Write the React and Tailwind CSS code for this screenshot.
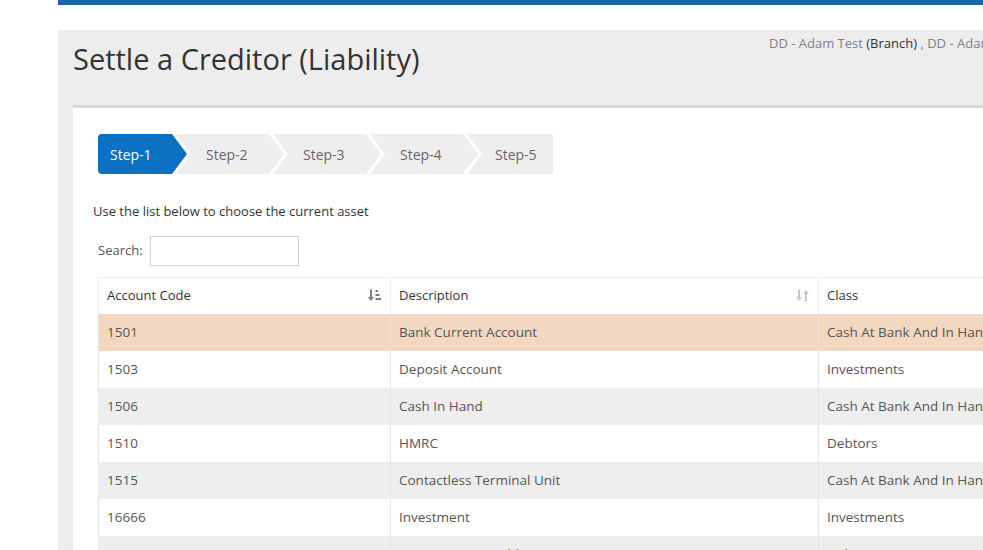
import React from 'react';

const steps = ['Step-1', 'Step-2', 'Step-3', 'Step-4', 'Step-5'];

const rows = [
  { code: '1501', desc: 'Bank Current Account', cls: 'Cash At Bank And In Hand', selected: true },
  { code: '1503', desc: 'Deposit Account', cls: 'Investments' },
  { code: '1506', desc: 'Cash In Hand', cls: 'Cash At Bank And In Hand' },
  { code: '1510', desc: 'HMRC', cls: 'Debtors' },
  { code: '1515', desc: 'Contactless Terminal Unit', cls: 'Cash At Bank And In Hand' },
  { code: '16666', desc: 'Investment', cls: 'Investments' },
  { code: '20000', desc: 'Accounts Receivable', cls: 'Debtors' },
];

const SortAsc = () => (
  <svg width="13" height="13" viewBox="0 0 13 13" className="text-[#7d7d7d]" fill="currentColor">
    <rect x="2" y="0.5" width="2" height="8" />
    <path d="M0 8h6l-3 4z" />
    <rect x="7.5" y="1" width="2.5" height="2" />
    <rect x="7.5" y="5" width="4" height="2" />
    <rect x="7.5" y="9" width="5.5" height="2" />
  </svg>
);

const SortBoth = () => (
  <svg width="13" height="13" viewBox="0 0 13 13" className="text-[#c9c9c9]" fill="currentColor">
    <rect x="2" y="0.5" width="2" height="8" />
    <path d="M0 8h6l-3 4z" />
    <rect x="9" y="4.5" width="2" height="8" />
    <path d="M7 5h6l-3 -4z" />
  </svg>
);

const Step = ({ label, index }) => {
  if (index === 0) {
    return (
      <div className="w-[89px] h-[40px] shrink-0 bg-[#0d71c3] text-white rounded-l-[4px] pl-[12px] flex items-center [clip-path:polygon(0_0,74px_0,89px_50%,74px_100%,0_100%)]">
        {label}
      </div>
    );
  }
  if (index === steps.length - 1) {
    return (
      <div className="w-[86px] h-[40px] shrink-0 -ml-[11px] bg-[#eeeeee] text-[#666] rounded-r-[3px] pl-[28px] flex items-center [clip-path:polygon(0_0,100%_0,100%_100%,0_100%,15px_50%)]">
        {label}
      </div>
    );
  }
  return (
    <div className="w-[108px] h-[40px] shrink-0 -ml-[11px] bg-[#eeeeee] text-[#666] pl-[30px] flex items-center [clip-path:polygon(0_0,93px_0,108px_50%,93px_100%,0_100%,15px_50%)]">
      {label}
    </div>
  );
};

export default function App() {
  return (
    <div className="w-[983px] h-[550px] overflow-hidden bg-white font-['Open_Sans',sans-serif] text-[#333]">
      <div className="ml-[58px] h-[5px] bg-[#1a66a9]" />

      <div className="mt-[25px] ml-[58px] w-[1100px] bg-[#eeeded]">
        {/* page header */}
        <div className="flex h-[75px]">
          <div className="w-[711px] pl-[15px] pt-[12px]">
            <h1 className="text-[29px] leading-[34px] text-[#333]">Settle a Creditor (Liability)</h1>
          </div>
          <div className="pt-[4px] text-[13px] leading-[18px] text-[#808080] whitespace-nowrap">
            DD - Adam Test <span className="text-[#333]">(Branch)</span> , DD - Adam Test (Company)
          </div>
        </div>

        {/* content box */}
        <div className="ml-[15px] h-[450px] border-t-[3px] border-[#d7d7d7] bg-white pl-[20px] pt-[26px]">
          <div className="flex ml-[5px] text-[14px]">
            {steps.map((s, i) => (
              <Step key={s} label={s} index={i} />
            ))}
          </div>

          <p className="mt-[28px] text-[13px] leading-[18px] text-[#333]">
            Use the list below to choose the current asset
          </p>

          <div className="mt-[16px] ml-[5px] flex items-center gap-[7px] text-[13px] text-[#555]">
            <label>Search:</label>
            <input type="text" className="w-[149px] h-[30px] border border-[#cfcfcf] bg-white outline-none px-2" />
          </div>

          <table className="mt-[11px] ml-[5px] table-fixed border-collapse w-[1020px]">
            <colgroup>
              <col className="w-[292px]" />
              <col className="w-[428px]" />
              <col className="w-[300px]" />
            </colgroup>
            <thead>
              <tr className="h-[36px] border-t border-[#ececec] text-[#333] text-[13px]">
                <th className="border-l border-[#ececec] pl-[8px] pr-[9px] text-left font-normal">
                  <div className="flex items-center justify-between">
                    <span>Account Code</span>
                    <SortAsc />
                  </div>
                </th>
                <th className="border-l border-[#ececec] pl-[8px] pr-[9px] text-left font-normal">
                  <div className="flex items-center justify-between">
                    <span>Description</span>
                    <SortBoth />
                  </div>
                </th>
                <th className="border-l border-[#ececec] pl-[8px] text-left font-normal">Class</th>
              </tr>
            </thead>
            <tbody className="text-[#555] text-[13.5px]">
              {rows.map((r, i) => (
                <tr
                  key={r.code}
                  className={`h-[37px] ${r.selected ? 'bg-[#f2d8c1]' : i % 2 === 0 ? 'bg-[#efeeee]' : 'bg-white'}`}
                >
                  <td className="border-l border-[#e6e6e6] pl-[8px] whitespace-nowrap">{r.code}</td>
                  <td className="border-l border-[#e6e6e6] pl-[8px] whitespace-nowrap">{r.desc}</td>
                  <td className="border-l border-[#e6e6e6] pl-[8px] whitespace-nowrap">{r.cls}</td>
                </tr>
              ))}
            </tbody>
          </table>
        </div>
      </div>
    </div>
  );
}
